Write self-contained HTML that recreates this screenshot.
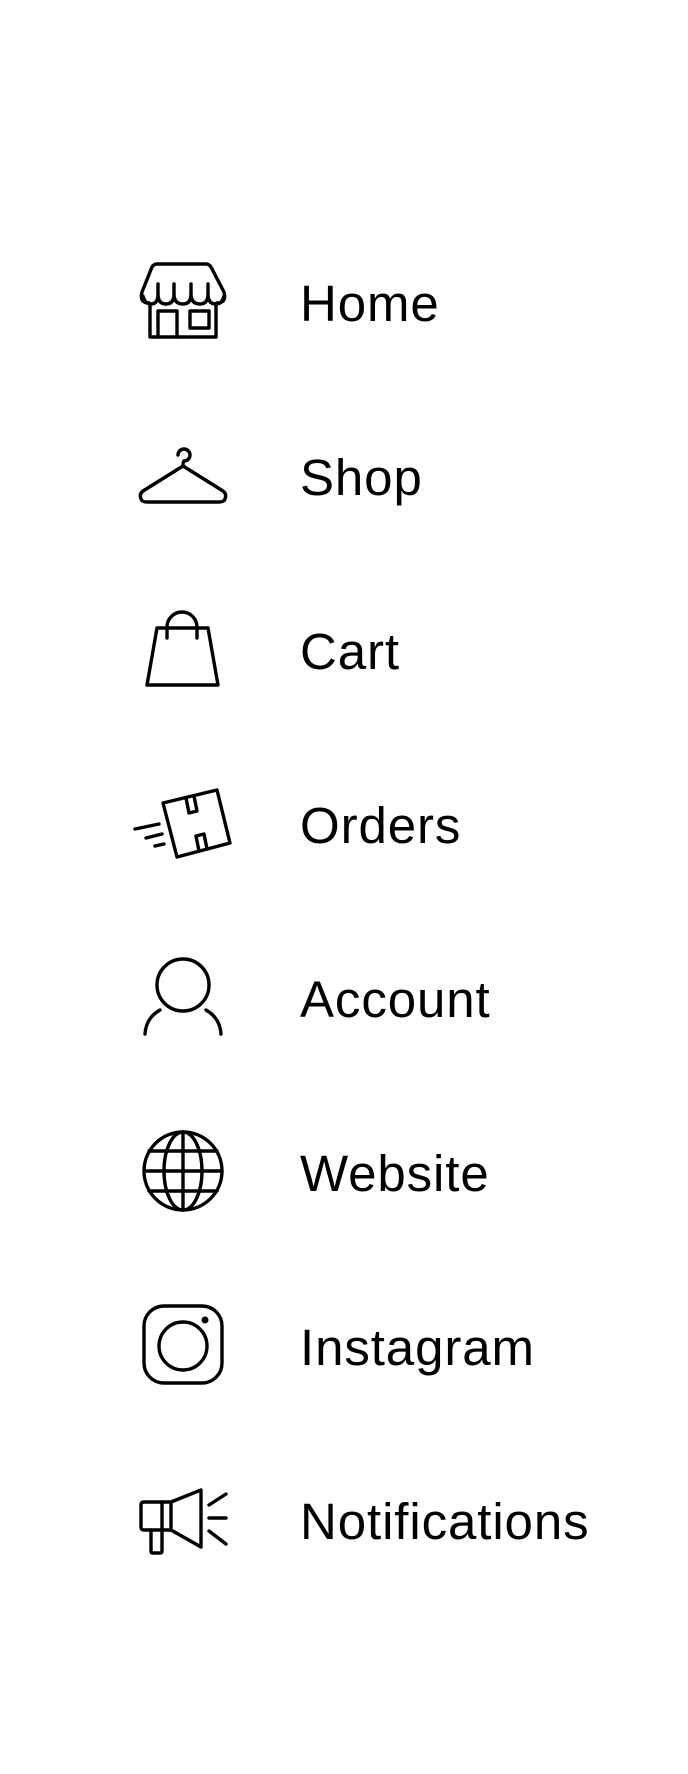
<!DOCTYPE html>
<html><head><meta charset="utf-8"><style>
html,body{margin:0;padding:0;background:#fff;}
body{width:688px;height:1774px;position:relative;overflow:hidden;}
.t{position:absolute;left:300px;font-family:"Liberation Sans",sans-serif;font-size:51px;line-height:60px;color:#000;letter-spacing:0.9px;}
svg{position:absolute;left:0;top:0;}
</style></head><body>
<svg width="688" height="1774" fill="none" stroke="#000" stroke-width="3.4" stroke-linejoin="round" stroke-linecap="round">
<!-- Home -->
<path d="M157 264 H206 Q209 264 211 267 L224 292 Q227 303 217 303 M157 264 Q154 264 152 267 L142 292 Q139 303 149 303"/>
<path d="M143 296 Q145 304 151 304 Q158 304 158 294 Q158 304 166 304 Q174 304 174 294 Q174 304 183 304 Q191 304 191 294 Q191 304 200 304 Q208 304 208 294 Q208 304 216 304 Q222 304 224 296"/>
<path d="M158 284 V294 M174 284 V294 M191 284 V294 M208 284 V294" />
<path d="M150 304 V337 H216 V304"/>
<path d="M158 337 V311 H177 V337"/>
<rect x="190" y="311" width="19" height="17"/>
<!-- Shop -->
<path d="M178 455 A6 6 0 1 1 184 461 Q183 462 183 466 L223 491 Q227 494 225 499 Q224 502 219 502 H147 Q142 502 141 499 Q139 494 143 491 L183 466"/>
<!-- Cart -->
<path d="M157 628 H208 L218 685 H147 Z"/>
<path d="M167 638 V627 A15 15 0 0 1 197 627 V638"/>
<!-- Orders -->
<path d="M163 803 L217 790 L230 843 L177 857 Z"/>
<path d="M186 798 L189 813 L197 811 L194 796"/>
<path d="M199 851 L196 836 L204 834 L207 849"/>
<path d="M135 829 L159 824 M146 838 L162 834 M155 846 L164 844"/>
<!-- Account -->
<circle cx="183" cy="985" r="26"/>
<path d="M160 1010 Q146 1018 145 1034 M206 1010 Q220 1018 221 1034"/>
<!-- Website -->
<circle cx="183" cy="1171" r="39"/>
<ellipse cx="183" cy="1171" rx="19" ry="39"/>
<path d="M183 1132 V1210 M144 1171 H222 M149 1151 H217 M149 1191 H217"/>
<!-- Instagram -->
<rect x="144" y="1306" width="78" height="77" rx="20"/>
<circle cx="183" cy="1346" r="24"/>
<circle cx="205" cy="1320" r="3.5" fill="#000" stroke="none"/>
<!-- Notifications -->
<path d="M171 1502 H144 Q141 1502 141 1505 V1527 Q141 1530 144 1530 H171 Z"/>
<path d="M162 1502 V1530"/>
<path d="M151 1530 V1551 Q151 1553 153 1553 H160 Q162 1553 162 1551 V1530"/>
<path d="M171 1502 L201 1490 V1547 L171 1530"/>
<path d="M209 1505 L226 1494 M209 1518 H226 M209 1531 L226 1544"/>
</svg>
<div class="t" style="top:274px">Home</div>
<div class="t" style="top:448px">Shop</div>
<div class="t" style="top:622px">Cart</div>
<div class="t" style="top:796px">Orders</div>
<div class="t" style="top:970px">Account</div>
<div class="t" style="top:1144px">Website</div>
<div class="t" style="top:1318px">Instagram</div>
<div class="t" style="top:1492px">Notifications</div>
</body></html>
